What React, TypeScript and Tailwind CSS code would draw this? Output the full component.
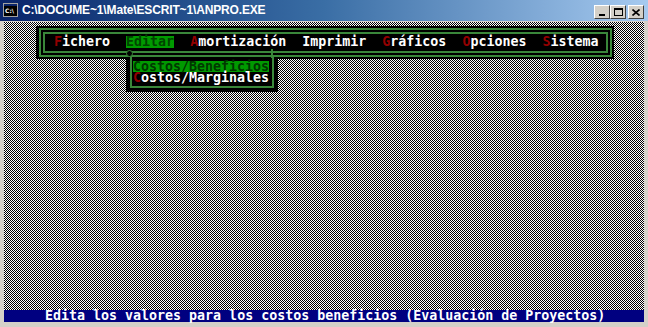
import React from "react"

const mono = "font-['DejaVu_Sans_Mono',monospace] font-bold text-[13.3px] leading-[12px] whitespace-pre"

const menu = [
  { hot: "F", rest: "ichero", gap: 2, active: false, red: true },
  { hot: "E", rest: "ditar", gap: 2, active: true, red: false },
  { hot: "A", rest: "mortización", gap: 2, active: false, red: true },
  { hot: "I", rest: "mprimir", gap: 2, active: false, red: false },
  { hot: "G", rest: "ráficos", gap: 2, active: false, red: true },
  { hot: "O", rest: "pciones", gap: 2, active: false, red: true },
  { hot: "S", rest: "istema", gap: 0, active: false, red: true },
]

function WinButton({ children }: { children: React.ReactNode }) {
  return (
    <div className="w-[16px] h-[14px] bg-[#d4d0c8] border border-t-white border-l-white border-r-[#404040] border-b-[#404040] flex items-center justify-center">
      {children}
    </div>
  )
}

// dithered console backdrop (1px checker)
function Checker() {
  return (
    <svg className="absolute inset-0 w-full h-full" shapeRendering="crispEdges">
      <defs>
        <pattern id="chk" width="2" height="2" patternUnits="userSpaceOnUse">
          <rect width="2" height="2" fill="#fff" />
          <rect x="0" y="0" width="1" height="1" fill="#000" />
          <rect x="1" y="1" width="1" height="1" fill="#000" />
        </pattern>
      </defs>
      <rect width="100%" height="100%" fill="url(#chk)" />
    </svg>
  )
}

export default function App() {
  return (
    <div className="w-[648px] h-[327px] bg-[#d4d0c8] flex flex-col overflow-hidden">
      {/* title bar */}
      <div className="h-[21px] shrink-0 flex items-start bg-gradient-to-r from-[#0a246a] via-[#3a6ea5] to-[#a6caf0] pl-[3px] pr-[4px]">
        <div className="mt-[3px] w-[15px] h-[14px] bg-[#0a246a] border border-[#a0a0a0] flex items-end">
          <div className="w-full h-[10px] bg-black text-white text-[6px] leading-[9px] font-bold font-['DejaVu_Sans',sans-serif] pl-[1px]">
            C:\
          </div>
        </div>
        <span className="ml-[4px] mt-[3px] text-white font-bold text-[12px] leading-[14px] tracking-[-0.15px] font-['Liberation_Sans',sans-serif]">
          C:\DOCUME~1\Mate\ESCRIT~1\ANPRO.EXE
        </span>
        <div className="ml-auto mt-[5px] flex">
          <WinButton>
            <div className="w-[6px] h-[2px] bg-black mt-[6px]" />
          </WinButton>
          <WinButton>
            <div className="w-[9px] h-[8px] border border-black border-t-2" />
          </WinButton>
          <div className="w-[2px]" />
          <WinButton>
            <svg width="8" height="7" viewBox="0 0 8 7">
              <path d="M0.5 0.5 L7.5 6.5 M7.5 0.5 L0.5 6.5" stroke="black" strokeWidth="1.6" />
            </svg>
          </WinButton>
        </div>
      </div>
      <div className="h-[1px] shrink-0" />

      {/* console */}
      <div className="mx-[4px] h-[300px] shrink-0 relative flex flex-col bg-[#808080]">
        <Checker />

        <div className="relative mt-[4px] ml-[32px] w-[578px] h-[33px] bg-black pt-[2px] pb-[2px] pl-[3px] pr-[2px]">
          <div className="h-full border-2 border-[#3a873a] p-[2px]">
            <div className="h-full border-2 border-[#3a873a] pl-[9px] pt-[2px]">
              <div className={`${mono} text-white flex`}>
                {menu.map((m) => (
                  <React.Fragment key={m.hot}>
                    <span className={m.active ? "bg-[#009a00] text-[#004400]" : ""}>
                      <span className={m.red ? "text-[#920000]" : ""}>{m.hot}</span>
                      {m.rest}
                    </span>
                    {m.gap > 0 && <span>{"  "}</span>}
                  </React.Fragment>
                ))}
              </div>
            </div>
          </div>
        </div>

        {/* dropdown */}
        <div className="absolute left-[122px] top-[35px] w-[152px] h-[35px] bg-black px-[4px] pb-[4px]">
          <div className="h-full border-x-2 border-b-2 border-[#3a873a] pt-[4px]">
            <div className={`${mono} bg-[#009a00] text-[#003800] w-[136px] ml-[1px] h-[11px] leading-[11px]`}>
              Costos/Beneficios
            </div>
            <div className={`${mono} text-white ml-[1px]`}>
              <span className="text-[#920000]">C</span>ostos/Marginales
            </div>
          </div>
        </div>
        <div className="absolute left-[122px] top-[28px] w-[7px] h-[7px] rounded-full border border-[#3a873a] bg-black" />
        <div className="absolute left-[267px] top-[27px] w-[2px] h-[9px] bg-[#3a873a]" />

        {/* status bar */}
        <div className={`relative mt-auto h-[12px] bg-[#000080] text-white pl-[41px] ${mono}`}>
          Edita los valores para los costos beneficios (Evaluación de Proyectos)
        </div>
      </div>
    </div>
  )
}
